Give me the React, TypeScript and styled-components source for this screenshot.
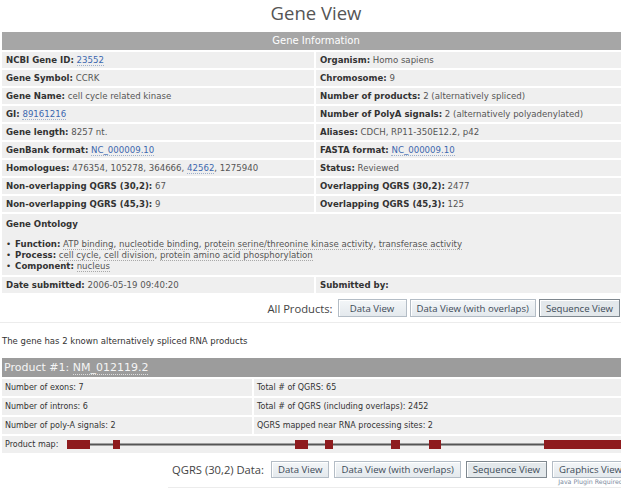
import React from "react";
import styled, { createGlobalStyle } from "styled-components";

const GlobalStyle = createGlobalStyle`
  html, body {
    margin: 0;
    padding: 0;
    background: #fff;
    overflow: hidden;
  }
  body {
    font-family: "DejaVu Sans", Verdana, sans-serif;
  }
`;

const Page = styled.div`
    width: 632px;
    color: #555;
`;

const Title = styled.h1`
    margin: 0;
    height: 30px;
    line-height: 26px;
    text-align: center;
    font-family: "Open Sans", "DejaVu Sans", sans-serif;
    font-weight: 400;
    font-size: 18.5px;
    color: #555;
`;

const InfoGrid = styled.div`
    display: grid;
    grid-template-columns: 312px 314px;
    gap: 2px;
    padding: 2px;
`;

const GridHeader = styled.div`
    grid-column: 1 / -1;
    height: 18px;
    line-height: 18px;
    background: #a6a6a6;
    color: #fff;
    font-size: 10px;
    text-align: center;
`;

const InfoCell = styled.div`
    background: #efefef;
    height: 16px;
    line-height: 16px;
    padding: 0 4px;
    font-size: 8.6px;
    color: #555;
    white-space: nowrap;
    overflow: hidden;
`;

const OntologyCell = styled.div`
    grid-column: 1 / -1;
    background: #efefef;
    padding: 4px 4px 3px;
    line-height: 12px;
    font-size: 8.6px;
    color: #555;
`;

const OntologyList = styled.ul`
    margin: 9px 0 0;
    padding: 0;
    list-style: none;

    li {
        line-height: 11px;
        white-space: nowrap;
    }
    li::before {
        content: "•";
        color: #333;
        margin-right: 4px;
    }
`;

const Label = styled.b`
    font-weight: bold;
    color: #333;
`;

const Link = styled.a`
    color: #3c67ae;
    text-decoration: none;
    border-bottom: 1px dotted #9fb0cc;
`;

const Term = styled.span`
    border-bottom: 1px dotted #a8a8a8;
`;

const TopBar = styled.div`
    display: flex;
    justify-content: flex-end;
    align-items: center;
    gap: 3px;
    padding: 4px 12px 5px 0;
    border-bottom: 1px solid #ececec;
`;

const BarLabel = styled.span`
    font-family: "Open Sans", "DejaVu Sans", sans-serif;
    font-size: 11.2px;
    line-height: 17px;
    color: #444;
    margin-right: 2px;
    white-space: nowrap;
`;

const Button = styled.button<{ $active?: boolean; $w?: number; $h?: number }>`
    box-sizing: border-box;
    height: ${(p) => p.$h ?? 18}px;
    ${(p) => (p.$w ? `width: ${p.$w}px;` : "")}
    padding: 0 6px;
    margin: 0;
    font-family: "Open Sans", "DejaVu Sans", sans-serif;
    font-size: 9.6px;
    color: #3d4b58;
    white-space: nowrap;
    border-radius: 0;
    border: 1px solid ${(p) => (p.$active ? "#7f888f" : "#b4bdc6")};
    background: ${(p) => (p.$active ? "#e3e8eb" : "linear-gradient(#f3f6f8, #e4e9ed)")};
    box-shadow: inset 1px 1px 0 #fff;
`;

const Intro = styled.p`
    margin: 12px 0 0 2px;
    font-size: 8.5px;
    line-height: 12px;
    color: #333;
`;

const ProductGrid = styled.div`
    display: grid;
    grid-template-columns: 250px 376px;
    gap: 2px;
    padding: 2px;
    margin-top: 9px;
`;

const ProductHeader = styled.div`
    grid-column: 1 / -1;
    height: 19px;
    line-height: 19px;
    padding-left: 2px;
    background: #9c9c9c;
    color: #f5f5f5;
    font-size: 11px;
`;

const Accession = styled.span`
    border-bottom: 1px dotted #ddd;
`;

const ProductCell = styled.div`
    background: #efefef;
    height: 17px;
    line-height: 17px;
    padding: 0 3px;
    font-size: 8px;
    color: #333;
    white-space: nowrap;
`;

const MapCell = styled(ProductCell)`
    grid-column: 1 / -1;
    display: flex;
    align-items: center;
    padding-right: 0;
`;

const MapLabel = styled.span`
    flex: none;
    width: 62px;
`;

const BottomWrap = styled.div`
    display: flex;
    justify-content: flex-end;
    padding-right: 3px;
`;

const QgrsBar = styled.div`
    display: flex;
    align-items: flex-start;
    gap: 5px;
    padding: 6px 0 1px 4px;
    border-bottom: 1px solid #ececec;
`;

const ButtonStack = styled.div`
    display: flex;
    flex-direction: column;
    align-items: center;
`;

const Note = styled.span`
    font-size: 6.3px;
    line-height: 8px;
    color: #7d8ba0;
    white-space: nowrap;
`;

const geneRows = (): [React.ReactNode, React.ReactNode][] => [
    [
        <><Label>NCBI Gene ID:</Label> <Link>23552</Link></>,
        <><Label>Organism:</Label> Homo sapiens</>,
    ],
    [
        <><Label>Gene Symbol:</Label> CCRK</>,
        <><Label>Chromosome:</Label> 9</>,
    ],
    [
        <><Label>Gene Name:</Label> cell cycle related kinase</>,
        <><Label>Number of products:</Label> 2 (alternatively spliced)</>,
    ],
    [
        <><Label>GI:</Label> <Link>89161216</Link></>,
        <><Label>Number of PolyA signals:</Label> 2 (alternatively polyadenylated)</>,
    ],
    [
        <><Label>Gene length:</Label> 8257 nt.</>,
        <><Label>Aliases:</Label> CDCH, RP11-350E12.2, p42</>,
    ],
    [
        <><Label>GenBank format:</Label> <Link>NC_000009.10</Link></>,
        <><Label>FASTA format:</Label> <Link>NC_000009.10</Link></>,
    ],
    [
        <><Label>Homologues:</Label> 476354, 105278, 364666, <Link>42562</Link>, 1275940</>,
        <><Label>Status:</Label> Reviewed</>,
    ],
    [
        <><Label>Non-overlapping QGRS (30,2):</Label> 67</>,
        <><Label>Overlapping QGRS (30,2):</Label> 2477</>,
    ],
    [
        <><Label>Non-overlapping QGRS (45,3):</Label> 9</>,
        <><Label>Overlapping QGRS (45,3):</Label> 125</>,
    ],
];

const ontology = [
    { name: "Function:", terms: ["ATP binding", "nucleotide binding", "protein serine/threonine kinase activity", "transferase activity"] },
    { name: "Process:", terms: ["cell cycle", "cell division", "protein amino acid phosphorylation"] },
    { name: "Component:", terms: ["nucleus"] },
];

const productRows = [
    ["Number of exons: 7", "Total # of QGRS: 65"],
    ["Number of introns: 6", "Total # of QGRS (including overlaps): 2452"],
    ["Number of poly-A signals: 2", "QGRS mapped near RNA processing sites: 2"],
];

// exon blocks, x positions relative to the start of the map
const exons = [
    [0, 23],
    [46, 53],
    [228, 241],
    [258, 266],
    [324, 333],
    [362, 374],
    [477, 563],
];

const ProductMap: React.FC = () => (
    <svg width="563" height="9" viewBox="0 0 563 9">
        <rect x="0" y="3.5" width="563" height="2" fill="#555" />
        {exons.map(([a, b], i) => (
            <rect key={i} x={a} y="0" width={b - a} height="9" fill="#8e1b1e" />
        ))}
    </svg>
);

export default function App() {
    return (
        <Page>
            <GlobalStyle />
            <Title>Gene View</Title>

            <InfoGrid>
                <GridHeader>Gene Information</GridHeader>
                {geneRows().map(([left, right], i) => (
                    <React.Fragment key={i}>
                        <InfoCell>{left}</InfoCell>
                        <InfoCell>{right}</InfoCell>
                    </React.Fragment>
                ))}
                <OntologyCell>
                    <Label>Gene Ontology</Label>
                    <OntologyList>
                        {ontology.map((o) => (
                            <li key={o.name}>
                                <Label>{o.name}</Label>{" "}
                                {o.terms.map((t, i) => (
                                    <React.Fragment key={t}>
                                        <Term>{t}</Term>
                                        {i < o.terms.length - 1 ? ", " : ""}
                                    </React.Fragment>
                                ))}
                            </li>
                        ))}
                    </OntologyList>
                </OntologyCell>
                <InfoCell>
                    <Label>Date submitted:</Label> 2006-05-19 09:40:20
                </InfoCell>
                <InfoCell>
                    <Label>Submitted by:</Label>
                </InfoCell>
            </InfoGrid>

            <TopBar>
                <BarLabel>All Products:</BarLabel>
                <Button $w={69}>Data View</Button>
                <Button>Data View (with overlaps)</Button>
                <Button $active>Sequence View</Button>
            </TopBar>

            <Intro>The gene has 2 known alternatively spliced RNA products</Intro>

            <ProductGrid>
                <ProductHeader>
                    Product #1: <Accession>NM_012119.2</Accession>
                </ProductHeader>
                {productRows.map(([l, r]) => (
                    <React.Fragment key={l}>
                        <ProductCell>{l}</ProductCell>
                        <ProductCell>{r}</ProductCell>
                    </React.Fragment>
                ))}
                <MapCell>
                    <MapLabel>Product map:</MapLabel>
                    <ProductMap />
                </MapCell>
            </ProductGrid>

            <BottomWrap>
                <QgrsBar>
                    <BarLabel>QGRS (30,2) Data:</BarLabel>
                    <Button $h={17}>Data View</Button>
                    <Button $h={17}>Data View (with overlaps)</Button>
                    <Button $h={17} $active>Sequence View</Button>
                    <ButtonStack>
                        <Button $h={17}>Graphics View</Button>
                        <Note>Java Plugin Required</Note>
                    </ButtonStack>
                </QgrsBar>
            </BottomWrap>
        </Page>
    );
}
